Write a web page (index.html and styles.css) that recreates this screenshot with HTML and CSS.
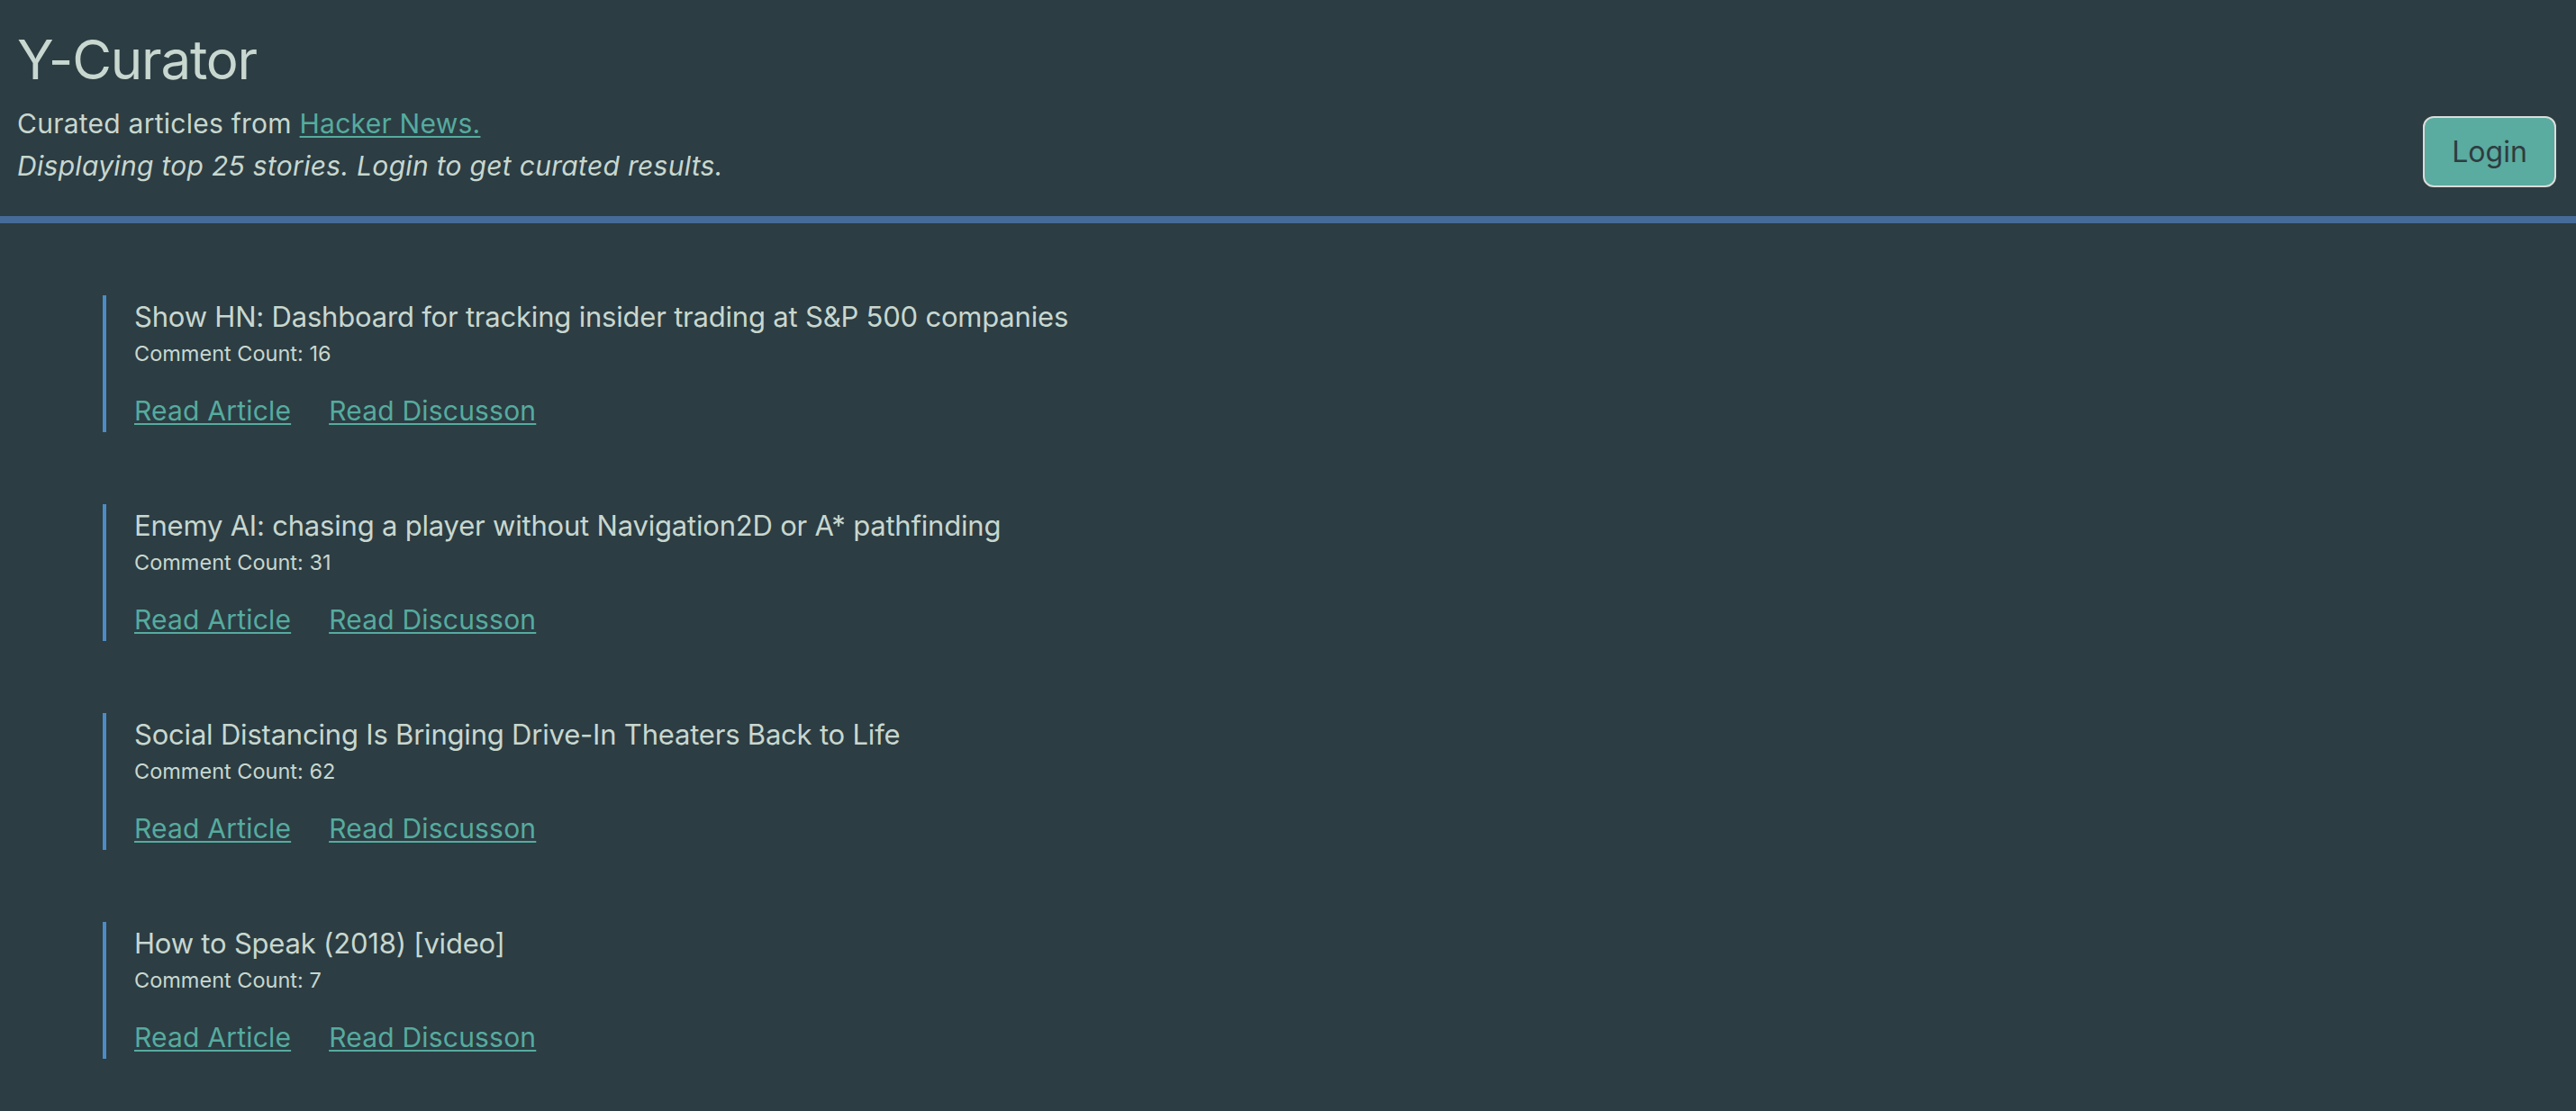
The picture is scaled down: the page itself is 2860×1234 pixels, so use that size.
FILE: index.html
```html
<!DOCTYPE html>
<html lang="en">
<head>
<meta charset="utf-8">
<title>Y-Curator</title>
<link rel="stylesheet" href="styles.css">
</head>
<body>
<header class="site-header">
  <div class="brand">
    <h1 class="brand-title">Y-Curator</h1>
    <p class="brand-sub">Curated articles from <a href="#" class="link">Hacker News.</a></p>
    <p class="brand-note">Displaying top 25 stories. Login to get curated results.</p>
  </div>
  <button class="login-btn" type="button">Login</button>
</header>
<main class="stories">
  <article class="story">
    <h2 class="story-title">Show HN: Dashboard for tracking insider trading at S&amp;P 500 companies</h2>
    <p class="story-meta">Comment Count: 16</p>
    <div class="story-links"><a href="#" class="link">Read Article</a><a href="#" class="link">Read Discusson</a></div>
  </article>
  <article class="story">
    <h2 class="story-title">Enemy AI: chasing a player without Navigation2D or A* pathfinding</h2>
    <p class="story-meta">Comment Count: 31</p>
    <div class="story-links"><a href="#" class="link">Read Article</a><a href="#" class="link">Read Discusson</a></div>
  </article>
  <article class="story">
    <h2 class="story-title">Social Distancing Is Bringing Drive-In Theaters Back to Life</h2>
    <p class="story-meta">Comment Count: 62</p>
    <div class="story-links"><a href="#" class="link">Read Article</a><a href="#" class="link">Read Discusson</a></div>
  </article>
  <article class="story">
    <h2 class="story-title">How to Speak (2018) [video]</h2>
    <p class="story-meta">Comment Count: 7</p>
    <div class="story-links"><a href="#" class="link">Read Article</a><a href="#" class="link">Read Discusson</a></div>
  </article>
</main>
</body>
</html>
```
FILE: styles.css
```css
html, body {
  margin: 0;
  padding: 0;
  background: #2c3d43;
  color: #c8d7cf;
  font-family: Inter, "Noto Sans", sans-serif;
}

.site-header {
  display: flex;
  justify-content: space-between;
  align-items: flex-end;
  padding: 0 22px 36px 19px;
  border-bottom: 8px solid #456b98;
}

.brand-title {
  margin: 30px 0 0;
  font-size: 60px;
  font-weight: 400;
  line-height: 72px;
  letter-spacing: -1.2px;
}

.brand-sub {
  margin: 15px 0 0;
  font-size: 30px;
  line-height: 40px;
  letter-spacing: 0.25px;
}

.brand-note {
  margin: 7px 0 0;
  font-size: 30px;
  line-height: 40px;
  font-style: italic;
  letter-spacing: 0.3px;
}

.link {
  color: #56ab9f;
  text-decoration: underline;
  text-decoration-thickness: 2px;
  text-underline-offset: 3px;
}

.login-btn {
  width: 148px;
  height: 79px;
  margin-bottom: -4px;
  background: #5aaba0;
  border: 2px solid #dadcd9;
  border-radius: 12px;
  color: #2e3c3f;
  font-family: Inter, "Noto Sans", sans-serif;
  font-size: 32px;
  padding: 0;
}

.stories {
  padding: 80px 0 0 114px;
}

.story {
  border-left: 4px solid #4b8cc6;
  padding: 4px 0 6px 31px;
  margin-bottom: 80px;
}

.story:last-child {
  margin-bottom: 0;
}

.story-title {
  margin: 0;
  font-size: 31px;
  font-weight: 400;
  line-height: 40px;
  letter-spacing: -0.2px;
}

.story-meta {
  margin: 7px 0 0;
  font-size: 23.5px;
  line-height: 28px;
}

.story-links {
  display: flex;
  gap: 42px;
  margin-top: 31px;
  font-size: 30px;
  line-height: 36px;
  letter-spacing: 0.2px;
}
```
